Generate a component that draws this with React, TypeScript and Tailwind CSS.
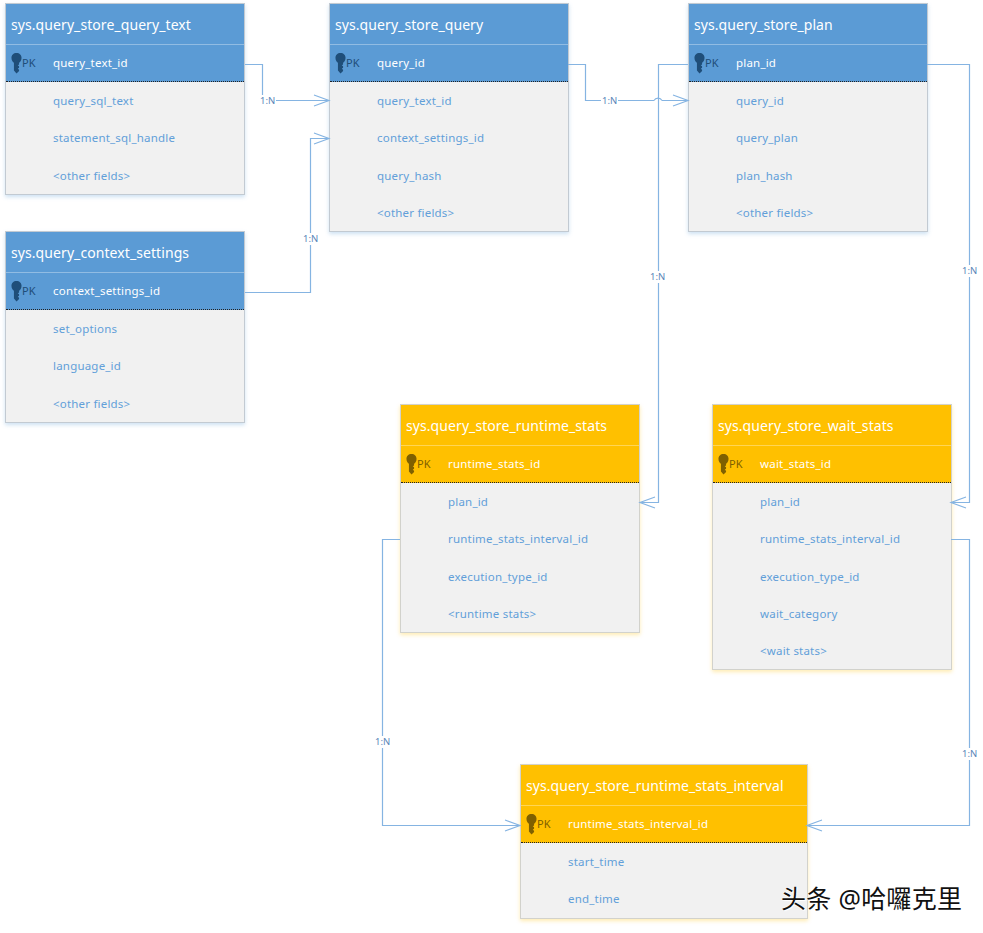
const blue = {
  head: 'bg-[#5b9bd5]',
  key: '#1f4e79',
  pk: 'text-[#1f4e79]',
  border: 'border-[#c2cad2]',
  shadow: 'shadow-[0_2px_4px_rgba(91,155,213,0.3)]',
};
const gold = {
  head: 'bg-[#ffc000]',
  key: '#7f6000',
  pk: 'text-[#7f6000]',
  border: 'border-[#d2d2cc]',
  shadow: 'shadow-[0_2px_4px_rgba(255,192,0,0.3)]',
};

const tables = [
  { name: 'sys.query_store_query_text', pk: 'query_text_id', fields: ['query_sql_text', 'statement_sql_handle', '<other fields>'], pos: 'left-[5px] top-[3px] w-[240px]', theme: blue },
  { name: 'sys.query_store_query', pk: 'query_id', fields: ['query_text_id', 'context_settings_id', 'query_hash', '<other fields>'], pos: 'left-[329px] top-[3px] w-[240px]', theme: blue },
  { name: 'sys.query_store_plan', pk: 'plan_id', fields: ['query_id', 'query_plan', 'plan_hash', '<other fields>'], pos: 'left-[688px] top-[3px] w-[240px]', theme: blue },
  { name: 'sys.query_context_settings', pk: 'context_settings_id', fields: ['set_options', 'language_id', '<other fields>'], pos: 'left-[5px] top-[231px] w-[240px]', theme: blue },
  { name: 'sys.query_store_runtime_stats', pk: 'runtime_stats_id', fields: ['plan_id', 'runtime_stats_interval_id', 'execution_type_id', '<runtime stats>'], pos: 'left-[400px] top-[404px] w-[240px]', theme: gold },
  { name: 'sys.query_store_wait_stats', pk: 'wait_stats_id', fields: ['plan_id', 'runtime_stats_interval_id', 'execution_type_id', 'wait_category', '<wait stats>'], pos: 'left-[712px] top-[404px] w-[240px]', theme: gold },
  { name: 'sys.query_store_runtime_stats_interval', pk: 'runtime_stats_interval_id', fields: ['start_time', 'end_time'], pos: 'left-[520px] top-[764px] w-[288px]', theme: gold },
];

function KeyIcon({ color }: { color: string }) {
  return (
    <svg width="12" height="23" viewBox="0 0 12 23" fill={color}>
      <path d="M6 0C2.700 0 .5 2.300 .5 5.300c0 2.700 1.200 4.400 2.700 5.500V19l2.800 3.500L8.800 19.800v-1.600L7.400 17.200l1.400-1.200v-1.500L7.400 13.500l1.400-1V10.800c1.500-1.100 2.700-2.800 2.700-5.500C11.500 2.300 9.300 0 6 0z" />
    </svg>
  );
}

function Table({ t }: { t: (typeof tables)[number] }) {
  return (
    <div className={`absolute flex flex-col border ${t.pos} ${t.theme.border} ${t.theme.shadow} bg-[#f1f1f1]`}>
      <div className={`h-[41px] flex items-center pl-[5px] text-[14px] tracking-[0.08px] text-white ${t.theme.head} border-b border-[#ffffff55]`}>
        {t.name}
      </div>
      <div className={`h-[37px] flex items-center text-[11.500px] tracking-[0.2px] text-white ${t.theme.head} border-b border-dotted border-[#222222]`}>
        <span className="ml-[5px] w-[11px] flex">
          <KeyIcon color={t.theme.key} />
        </span>
        <span className={`w-[31px] text-[11px] ${t.theme.pk}`}>PK</span>
        <span>{t.pk}</span>
      </div>
      <div className="flex flex-col pl-[47px] text-[11.500px] tracking-[0.2px] text-[#629fd9]">
        {t.fields.map((f) => (
          <div key={f} className="h-[37.300px] flex items-center">
            {f}
          </div>
        ))}
      </div>
    </div>
  );
}

const lines = [
  'M245 64.500H262.500V100.500H329',
  'M568 64.500H585.500V100.500H654M662 100.500H688',
  'M245 292.500H310.500V138.500H329',
  'M688 64.500H658.500V502.500H640',
  'M927 64.500H969.500V502.500H951',
  'M400 539.500H382.500V825.500H520',
  'M951 539.500H969.500V825.500H807',
];

const arrows = [
  'M314 95L329 100.500L314 106',
  'M314 133L329 138.500L314 144',
  'M673 95L688 100.500L673 106',
  'M655 497L640 502.500L655 508',
  'M966 497L951 502.500L966 508',
  'M505 820L520 825.500L505 831',
  'M822 820L807 825.500L822 831',
];

const labels = [
  { x: 'left-[259px] top-[95px]', t: '1:N' },
  { x: 'left-[601px] top-[95px]', t: '1:N' },
  { x: 'left-[302px] top-[233px]', t: '1:N' },
  { x: 'left-[649px] top-[271px]', t: '1:N' },
  { x: 'left-[961px] top-[265px]', t: '1:N' },
  { x: 'left-[374px] top-[736px]', t: '1:N' },
  { x: 'left-[961px] top-[748px]', t: '1:N' },
];

export default function App() {
  return (
    <div className="relative w-[983px] h-[933px] overflow-hidden bg-white font-['Noto_Sans',sans-serif]">
      {tables.map((t) => (
        <Table key={t.name} t={t} />
      ))}
      <svg className="absolute left-0 top-0" width="983" height="933" fill="none" stroke="#85b4e2" strokeWidth="1.2">
        {lines.map((d) => (
          <path key={d} d={d} />
        ))}
        <path d="M654 100.500a4.500 4.500 0 0 1 8 0" />
        {arrows.map((d) => (
          <path key={d} d={d} />
        ))}
      </svg>
      {labels.map((l) => (
        <span key={l.x} className={`absolute ${l.x} bg-white px-[1px] text-[9.500px] leading-[12px] text-[#5a86b8]`}>
          {l.t}
        </span>
      ))}
      <div className="absolute left-[781px] top-[881px] text-[25px] leading-[34px] tracking-[0.3px] text-[#111111] font-['Noto_Sans','Noto_Sans_CJK_SC',sans-serif] [text-shadow:0_0_2px_#fff,0_0_2px_#fff,1px_1px_1px_#fff]">
        头条 @哈囉克里
      </div>
    </div>
  );
}
